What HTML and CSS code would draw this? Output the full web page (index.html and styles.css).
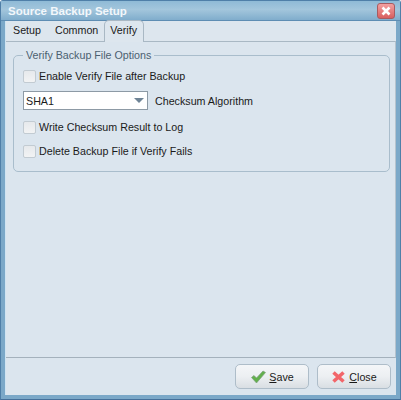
FILE: index.html
```html
<!DOCTYPE html>
<html lang="en">
<head>
<meta charset="utf-8">
<title>Source Backup Setup</title>
<link rel="stylesheet" href="styles.css">
</head>
<body>
<div class="window">
  <div class="titlebar">
    <span class="title">Source Backup Setup</span>
    <span class="close-x">
      <svg width="16" height="14" viewBox="0 0 16 14"><path d="M4.5 3.5 L11.5 10.5 M11.5 3.5 L4.5 10.5" stroke="#fff" stroke-width="2.6" fill="none"/></svg>
    </span>
  </div>
  <div class="client">
    <div class="tabs">
      <div class="tab">Setup</div>
      <div class="tab">Common</div>
      <div class="tab active">Verify</div>
    </div>
    <div class="panel">
      <fieldset class="group">
        <legend class="legend">Verify Backup File Options</legend>
        <label class="row first"><span class="check"></span>Enable Verify File after Backup</label>
        <div class="combo-row">
          <div class="combo"><span>SHA1</span><span class="arrow"></span></div>
          <span>Checksum Algorithm</span>
        </div>
        <label class="row second"><span class="check"></span>Write Checksum Result to Log</label>
        <label class="row"><span class="check"></span>Delete Backup File if Verify Fails</label>
      </fieldset>
    </div>
    <div class="footer">
      <button class="btn">
        <svg width="16" height="14" viewBox="0 0 16 14"><path d="M1.5 7.5 L4 5.5 L6.5 8 L13 1 L15.5 2.5 L6.5 13 Z" fill="#62b04c" stroke="#7f9f80" stroke-width="0.7"/></svg>
        <span><u>S</u>ave</span>
      </button>
      <button class="btn">
        <svg width="15" height="14" viewBox="0 0 15 14"><path d="M2.5 2.5 L12.5 11.5 M12.5 2.5 L2.5 11.5" stroke="#f2666a" stroke-width="3.6" fill="none"/></svg>
        <span><u>C</u>lose</span>
      </button>
    </div>
  </div>
</div>
</body>
</html>
```

FILE: styles.css
```css
html, body {
  margin: 0;
  padding: 0;
}
body {
  font-family: "Liberation Sans", sans-serif;
  font-size: 10.7px;
  color: #1a1a1a;
}
.window {
  box-sizing: border-box;
  width: 401px;
  height: 400px;
  display: flex;
  flex-direction: column;
  background: #7ba8c8;
  border: 1px solid #4f7fa8;
  border-bottom-color: #46709a;
  padding: 0 4px 4px;
  border-radius: 3px 3px 0 0;
}
.titlebar {
  height: 19px;
  display: flex;
  align-items: center;
  justify-content: space-between;
  margin: 0 -4px;
  padding: 0 5px 0 7px;
  background: linear-gradient(#8fbad6, #a3c6dc 45%, #80adcc);
  border-bottom: 1px solid #5e8db3;
}
.title {
  color: #f2f7fb;
  font-weight: bold;
  font-size: 11.5px;
}
.close-x {
  width: 16px;
  height: 14px;
  display: flex;
  background: linear-gradient(#f3a0a0, #d85f5f);
  border: 1px solid #a85b60;
  border-radius: 3px;
}
.client {
  flex: 1;
  display: flex;
  flex-direction: column;
  background: #dde6ee;
  border-left: 1px solid #cfe4f2;
  min-height: 0;
}
.tabs {
  height: 20px;
  display: flex;
  align-items: flex-end;
  position: relative;
  z-index: 1;
}
.tab {
  padding: 0 7px 4px;
  line-height: 14px;
}
.tab.active {
  background: #dde6ee;
  border: 1px solid #a9b8c4;
  border-bottom: none;
  border-radius: 5px 5px 0 0;
  padding: 2px 6px 5px 5px;
  margin: 0 0 -1px -1px;
}
.panel {
  flex: 1;
  box-sizing: border-box;
  padding: 7px 5px 0 7px;
  background: #dbe5ee;
  border-top: 1px solid #a9b8c4;
  border-bottom: 1px solid #a4b1bc;
  border-right: 1px solid #b5c3ce;
}
.group {
  margin: 0;
  height: 123px;
  box-sizing: border-box;
  padding: 0 0 0 9px;
  border: 1px solid #a9bdcc;
  border-radius: 5px;
}
.legend {
  margin-left: 0;
  padding: 0 3px;
  color: #4b5f70;
  line-height: 13px;
}
.row {
  display: flex;
  align-items: center;
  gap: 3px;
  height: 16px;
  margin-top: 8px;
}
.row.first {
  margin-top: 6px;
}
.row.second {
  margin-top: 9px;
}
.check {
  width: 11px;
  height: 11px;
  background: linear-gradient(#e6e9ec, #f2f3f4);
  border: 1px solid #c2cbd2;
  border-radius: 2px;
}
.combo-row {
  display: flex;
  align-items: center;
  gap: 7px;
  margin-top: 7px;
}
.combo {
  box-sizing: border-box;
  width: 125px;
  height: 19px;
  display: flex;
  align-items: center;
  justify-content: space-between;
  padding: 0 3px 0 2px;
  background: #fff;
  border: 1px solid #8d9aa5;
}
.arrow {
  width: 0;
  height: 0;
  border-left: 5px solid transparent;
  border-right: 5px solid transparent;
  border-top: 5px solid #6f8496;
}
.footer {
  height: 37px;
  display: flex;
  justify-content: flex-end;
  align-items: center;
  gap: 8px;
  padding-right: 5px;
  background: #dbe5ee;
}
.btn {
  box-sizing: border-box;
  width: 74px;
  height: 25px;
  display: flex;
  align-items: center;
  justify-content: center;
  gap: 3px;
  padding: 0;
  font: inherit;
  color: #1a1a1a;
  background: linear-gradient(#f4f6f8, #eceff2 50%, #d9dee3);
  border: 1px solid #aebdc9;
  border-radius: 5px;
}
```
